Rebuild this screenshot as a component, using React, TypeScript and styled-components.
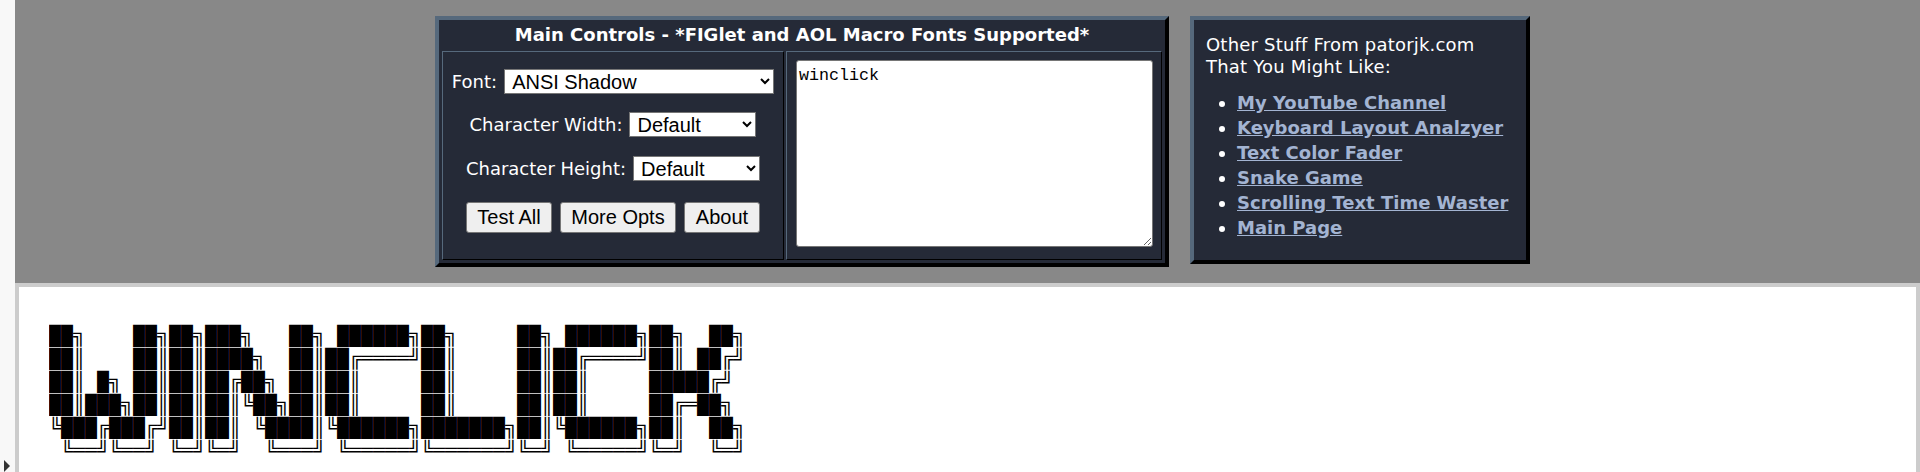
import React from 'react';
import styled, { createGlobalStyle } from 'styled-components';

const GlobalStyle = createGlobalStyle`
    html, body {
        margin: 0;
        height: 100%;
        overflow: hidden;
    }
    body {
        background: #888888;
        font-family: "DejaVu Sans", Verdana, sans-serif;
        font-size: 18px;
        color: #ffffff;
    }
`;

const Page = styled.div`
    display: flex;
    height: 472px;
`;

const SideStrip = styled.div`
    flex: 0 0 15px;
    display: flex;
    align-items: flex-end;
    padding-left: 4px;
    box-sizing: border-box;
    background: #f8f8f8;
`;

const SideToggle = styled.div`
    width: 0;
    height: 0;
    border-left: 6px solid #333333;
    border-top: 6px solid transparent;
    border-bottom: 6px solid transparent;
`;

const Main = styled.div`
    flex: 1;
    min-width: 0;
    display: flex;
    flex-direction: column;
`;

const TopRow = styled.div`
    display: flex;
    align-items: flex-start;
    gap: 21px;
    height: 283px;
    padding: 16px 0 0 420px;
    box-sizing: border-box;
    flex-shrink: 0;
`;

const Panel = styled.div<{ $width: number; $height: number }>`
    width: ${p => p.$width}px;
    height: ${p => p.$height}px;
    box-sizing: border-box;
    display: flex;
    flex-direction: column;
    background: #252a37;
    border: 4px solid;
    border-color: #56697c #000000 #000000 #56697c;
`;

const PanelTitle = styled.div`
    height: 31px;
    line-height: 30px;
    text-align: center;
    font-weight: 700;
    white-space: nowrap;
`;

const CellRow = styled.div`
    flex: 1;
    display: flex;
    gap: 2px;
    padding: 0 3px 3px;
`;

const Cell = styled.div<{ $width: number }>`
    width: ${p => p.$width}px;
    box-sizing: border-box;
    border: 1px solid;
    border-color: #56697c #000000 #000000 #56697c;
`;

const ControlsCell = styled(Cell)`
    display: flex;
    flex-direction: column;
    align-items: center;
    padding-top: 17px;
`;

const InputCell = styled(Cell)`
    padding: 8px 8px 12px 9px;
`;

const ControlRow = styled.div<{ $top?: number }>`
    display: flex;
    align-items: center;
    justify-content: center;
    gap: 7px;
    margin-top: ${p => p.$top ?? 0}px;
`;

const Label = styled.label`
    white-space: nowrap;
`;

const Select = styled.select<{ $width: number }>`
    width: ${p => p.$width}px;
    height: 25px;
    padding-left: 3px;
    font-family: "Liberation Sans", Arial, sans-serif;
    font-size: 20px;
    background: #ffffff;
    color: #000000;
`;

const ButtonRow = styled.div`
    display: flex;
    gap: 8px;
    margin-top: 21px;
`;

const Button = styled.button<{ $width: number }>`
    width: ${p => p.$width}px;
    height: 31px;
    padding: 0;
    font-family: "Liberation Sans", Arial, sans-serif;
    font-size: 20px;
    color: #000000;
    background: #efefef;
    border: 1px solid #767676;
    border-radius: 3px;
`;

const TextInput = styled.textarea`
    display: block;
    width: 100%;
    height: 187px;
    box-sizing: border-box;
    margin: 0;
    padding: 5px 2px 2px;
    font-family: "Liberation Mono", monospace;
    font-size: 16.67px;
    color: #000000;
    background: #ffffff;
    border: 1px solid #767676;
    border-radius: 3px;
`;

const LinksBody = styled.div`
    padding: 14px 0 0 12px;
`;

const LinksIntro = styled.div`
    line-height: 22px;
    letter-spacing: 0.2px;
`;

const LinkList = styled.ul`
    margin: 12px 0 0;
    padding: 0 0 0 31px;
`;

const LinkItem = styled.li`
    line-height: 25px;
`;

const Link = styled.a`
    font-weight: 700;
    color: #a3b4d2;
    text-decoration: underline;
`;

const OutputPanel = styled.div`
    flex: 1;
    background: #ffffff;
    border: 4px solid #cccccc;
    border-bottom: 0;
    padding: 38px 30px 0;
`;

const Figlet = styled.pre`
    margin: 0;
    font-family: "Liberation Mono", "DejaVu Sans Mono", monospace;
    font-size: 19.5px;
    line-height: 23px;
    color: #000000;
    transform: scaleX(1.0256);
    transform-origin: left top;
`;

const figletText = [
    '██╗    ██╗██╗███╗   ██╗ ██████╗██╗     ██╗ ██████╗██╗  ██╗',
    '██║    ██║██║████╗  ██║██╔════╝██║     ██║██╔════╝██║ ██╔╝',
    '██║ █╗ ██║██║██╔██╗ ██║██║     ██║     ██║██║     █████╔╝ ',
    '██║███╗██║██║██║╚██╗██║██║     ██║     ██║██║     ██╔═██╗ ',
    '╚███╔███╔╝██║██║ ╚████║╚██████╗███████╗██║╚██████╗██║  ██╗',
    ' ╚══╝╚══╝ ╚═╝╚═╝  ╚═══╝ ╚═════╝╚══════╝╚═╝ ╚═════╝╚═╝  ╚═╝',
].join('\n');

const links = [
    'My YouTube Channel',
    'Keyboard Layout Analzyer',
    'Text Color Fader',
    'Snake Game',
    'Scrolling Text Time Waster',
    'Main Page',
];

export default function App() {
    return (
        <Page>
            <GlobalStyle />
            <SideStrip>
                <SideToggle />
            </SideStrip>
            <Main>
                <TopRow>
                    <Panel $width={734} $height={251}>
                        <PanelTitle>Main Controls - *FIGlet and AOL Macro Fonts Supported*</PanelTitle>
                        <CellRow>
                            <ControlsCell $width={342}>
                                <ControlRow>
                                    <Label>Font:</Label>
                                    <Select $width={270} defaultValue="ANSI Shadow">
                                        <option>ANSI Shadow</option>
                                    </Select>
                                </ControlRow>
                                <ControlRow $top={18}>
                                    <Label>Character Width:</Label>
                                    <Select $width={127} defaultValue="Default">
                                        <option>Default</option>
                                    </Select>
                                </ControlRow>
                                <ControlRow $top={19}>
                                    <Label>Character Height:</Label>
                                    <Select $width={127} defaultValue="Default">
                                        <option>Default</option>
                                    </Select>
                                </ControlRow>
                                <ButtonRow>
                                    <Button $width={86}>Test All</Button>
                                    <Button $width={116}>More Opts</Button>
                                    <Button $width={76}>About</Button>
                                </ButtonRow>
                            </ControlsCell>
                            <InputCell $width={376}>
                                <TextInput defaultValue="winclick" spellCheck={false} />
                            </InputCell>
                        </CellRow>
                    </Panel>
                    <Panel $width={340} $height={248}>
                        <LinksBody>
                            <LinksIntro>
                                Other Stuff From patorjk.com
                                <br />
                                That You Might Like:
                            </LinksIntro>
                            <LinkList>
                                {links.map(link => (
                                    <LinkItem key={link}>
                                        <Link href="#">{link}</Link>
                                    </LinkItem>
                                ))}
                            </LinkList>
                        </LinksBody>
                    </Panel>
                </TopRow>
                <OutputPanel>
                    <Figlet>{figletText}</Figlet>
                </OutputPanel>
            </Main>
        </Page>
    );
}
